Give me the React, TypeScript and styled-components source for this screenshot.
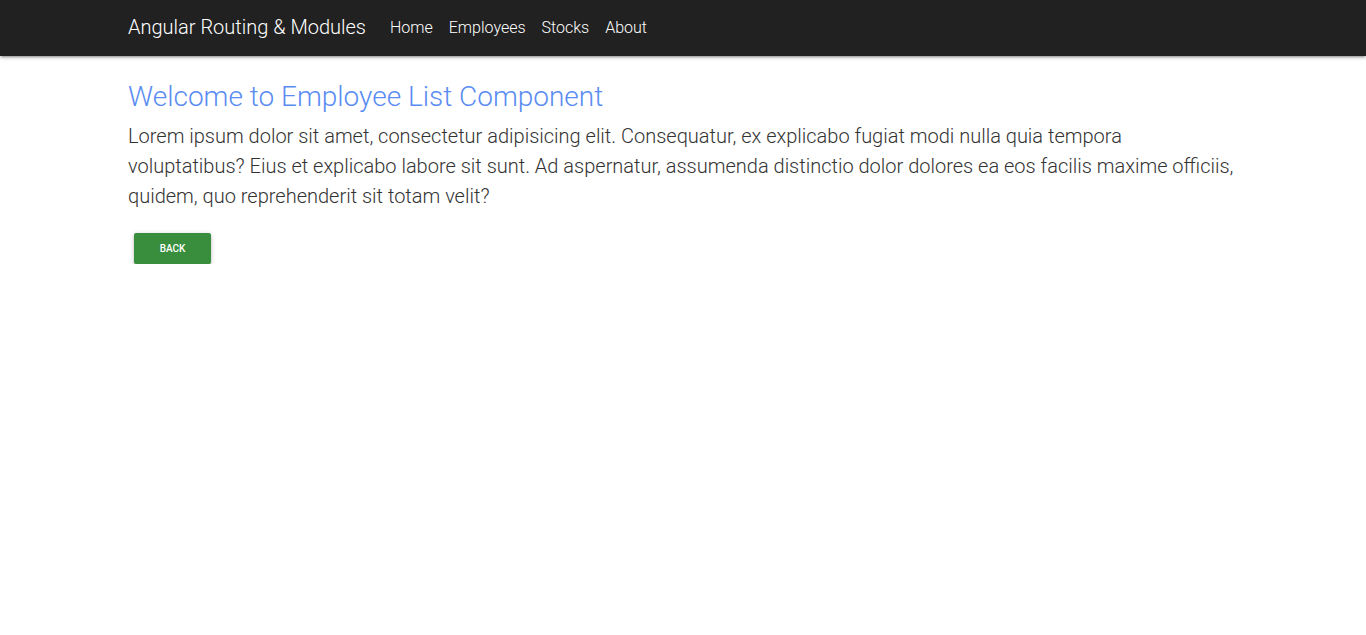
import React from "react";
import styled, { createGlobalStyle } from "styled-components";

const Global = createGlobalStyle`
  html, body { margin: 0; padding: 0; background: #fff; }
  body { font-family: Roboto, "Noto Sans", sans-serif; color: rgba(0,0,0,0.87); }
  * { box-sizing: border-box; }
`;

const NavBar = styled.nav`
  height: 56px;
  background: #212121;
  box-shadow: 0 2px 2px 0 rgba(0,0,0,0.14), 0 3px 1px -2px rgba(0,0,0,0.12), 0 1px 5px 0 rgba(0,0,0,0.2);
`;

const Container = styled.div`
  width: 1140px;
  margin: 0 auto;
  padding: 0 15px;
`;

const NavInner = styled(Container)`
  height: 100%;
  display: flex;
  align-items: center;
  padding-bottom: 2px;
`;

const Brand = styled.a`
  color: #fff;
  font-size: 20px;
  font-weight: 300;
  text-decoration: none;
  margin-right: 16px;
`;

const NavLinks = styled.ul`
  display: flex;
  list-style: none;
  margin: 0;
  padding: 0;
`;

const NavLink = styled.a`
  display: block;
  color: #fff;
  font-size: 16px;
  font-weight: 300;
  padding: 0 8px;
  text-decoration: none;
`;

const Main = styled(Container)`
  padding-top: 22px;
`;

const Title = styled.h1`
  margin: 0;
  font-size: 28px;
  font-weight: 300;
  line-height: 38px;
  color: #5a8cf2;
`;

const Text = styled.p`
  margin: 5px 0 0;
  font-size: 20px;
  font-weight: 300;
  line-height: 30px;
  color: #333;
`;

const Button = styled.button`
  margin: 22px 0 0 6px;
  width: 77px;
  height: 31px;
  border: none;
  border-radius: 2px;
  background: #388e3c;
  color: #fff;
  font-family: Roboto, sans-serif;
  font-size: 10px;
  font-weight: 500;
  text-transform: uppercase;
  cursor: pointer;
  box-shadow: 0 2px 2px 0 rgba(0,0,0,0.14), 0 3px 1px -2px rgba(0,0,0,0.12), 0 1px 5px 0 rgba(0,0,0,0.2);
`;

export default function App() {
  return (
    <>
      <Global />
      <NavBar>
        <NavInner>
          <Brand href="#">Angular Routing &amp; Modules</Brand>
          <NavLinks>
            <li><NavLink href="#">Home</NavLink></li>
            <li><NavLink href="#">Employees</NavLink></li>
            <li><NavLink href="#">Stocks</NavLink></li>
            <li><NavLink href="#">About</NavLink></li>
          </NavLinks>
        </NavInner>
      </NavBar>
      <Main>
        <Title>Welcome to Employee List Component</Title>
        <Text>
          Lorem ipsum dolor sit amet, consectetur adipisicing elit. Consequatur, ex explicabo fugiat modi nulla quia tempora voluptatibus? Eius et explicabo labore sit sunt. Ad aspernatur, assumenda distinctio dolor dolores ea eos facilis maxime officiis, quidem, quo reprehenderit sit totam velit?
        </Text>
        <Button>Back</Button>
      </Main>
    </>
  );
}
